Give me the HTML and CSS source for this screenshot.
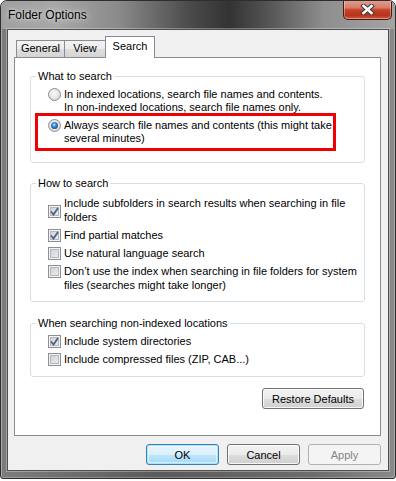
FILE: index.html
```html
<!DOCTYPE html>
<html lang="en">
<head>
    <meta charset="UTF-8">
    <meta name="viewport" content="width=device-width, initial-scale=1.0">
    <title>Folder Options</title>
    <link rel="stylesheet" href="styles.css">
</head>
<body>
    <div class="window">
        <div class="titlebar">
            <span class="title">Folder Options</span>
            <button class="close" aria-label="Close">
                <svg width="15" height="11" viewBox="0 0 15 11">
                    <path d="M3.5 2 L11.5 9 M11.5 2 L3.5 9" stroke="#3d3d3d" stroke-width="4.6" stroke-linecap="square" fill="none"/>
                    <path d="M3.5 2 L11.5 9 M11.5 2 L3.5 9" stroke="#fff" stroke-width="2.6" stroke-linecap="square" fill="none"/>
                </svg>
            </button>
        </div>

        <div class="client">
            <div class="tabs">
                <div class="tab">General</div>
                <div class="tab">View</div>
                <div class="tab active">Search</div>
            </div>

            <div class="panel">
                <fieldset class="group group-what">
                    <legend>What to search</legend>
                    <div class="opts">
                        <label class="opt">
                            <span class="radio"></span>
                            <span>In indexed locations, search file names and contents.<br>In non-indexed locations, search file names only.</span>
                        </label>
                        <label class="opt marked">
                            <span class="radio on"></span>
                            <span>Always search file names and contents (this might take<br>several minutes)</span>
                            <span class="highlight"></span>
                        </label>
                    </div>
                </fieldset>

                <fieldset class="group group-how">
                    <legend>How to search</legend>
                    <div class="opts">
                        <label class="opt mid">
                            <span class="check on"><svg width="11" height="11" viewBox="0 0 11 11"><path d="M2 5.5 L4.5 8.5 L9 2" stroke="#4d6185" stroke-width="1.8" fill="none"/></svg></span>
                            <span>Include subfolders in search results when searching in file<br>folders</span>
                        </label>
                        <label class="opt">
                            <span class="check on"><svg width="11" height="11" viewBox="0 0 11 11"><path d="M2 5.5 L4.5 8.5 L9 2" stroke="#4d6185" stroke-width="1.8" fill="none"/></svg></span>
                            <span>Find partial matches</span>
                        </label>
                        <label class="opt">
                            <span class="check"></span>
                            <span>Use natural language search</span>
                        </label>
                        <label class="opt">
                            <span class="check"></span>
                            <span>Don’t use the index when searching in file folders for system<br>files (searches might take longer)</span>
                        </label>
                    </div>
                </fieldset>

                <fieldset class="group group-non">
                    <legend>When searching non-indexed locations</legend>
                    <div class="opts">
                        <label class="opt">
                            <span class="check on"><svg width="11" height="11" viewBox="0 0 11 11"><path d="M2 5.5 L4.5 8.5 L9 2" stroke="#4d6185" stroke-width="1.8" fill="none"/></svg></span>
                            <span>Include system directories</span>
                        </label>
                        <label class="opt">
                            <span class="check"></span>
                            <span>Include compressed files (ZIP, CAB...)</span>
                        </label>
                    </div>
                </fieldset>

                <div class="panel-foot">
                    <button class="btn restore">Restore Defaults</button>
                </div>
            </div>

            <div class="dialog-buttons">
                <button class="btn default">OK</button>
                <button class="btn">Cancel</button>
                <button class="btn" disabled>Apply</button>
            </div>
        </div>
    </div>
</body>
</html>
```

FILE: styles.css
```css
* {
    margin: 0;
    padding: 0;
    box-sizing: border-box;
}

body {
    font-family: "Liberation Sans", Arial, sans-serif;
    font-size: 11px;
    color: #000;
    background: #fff;
}

.window {
    width: 396px;
    height: 479px;
    border: 1px solid #2e2e2e;
    border-radius: 7px 7px 3px 3px;
    background: linear-gradient(to right, #7d7d7d, #5a5a5a 40%, #6e6e6e 80%, #8a8a8a);
    box-shadow: inset 1px 1px 0 rgba(255,255,255,0.35), inset -1px -1px 0 rgba(255,255,255,0.25);
    display: flex;
    flex-direction: column;
    padding-bottom: 7px;
    overflow: hidden;
}

.titlebar {
    height: 28px;
    flex: none;
    display: flex;
    justify-content: space-between;
    align-items: flex-start;
    padding-left: 7px;
    padding-right: 3px;
    background: linear-gradient(to right, #a0a0a0 0%, #a6a6a6 14%, #8a8a8a 30%, #4a4a4a 48%, #333 58%, #555 68%, #8e8e8e 82%, #a4a4a4 100%);
}

.title {
    font-size: 12px;
    line-height: 28px;
    color: #000;
    text-shadow: 0 0 8px rgba(255,255,255,0.8), 0 0 3px rgba(255,255,255,0.6);
}

.close {
    width: 49px;
    height: 20px;
    margin-top: -1px;
    border: 1px solid #4a1a10;
    border-top: none;
    border-radius: 0 0 5px 5px;
    background: linear-gradient(#e2a193 0%, #d77c68 40%, #c4452b 52%, #b8321a 80%, #cf5c43 100%);
    box-shadow: inset 0 0 0 1px rgba(255,255,255,0.35);
    display: flex;
    align-items: center;
    justify-content: center;
}

.close svg {
    display: block;
}

.client {
    flex: 1;
    margin: 0 6px;
    background: #f0f0f0;
    border: 1px solid #4f4f4f;
    box-shadow: 0 0 0 1px rgba(255,255,255,0.3);
    display: flex;
    flex-direction: column;
}

.tabs {
    display: flex;
    align-items: flex-end;
    padding-left: 8px;
    margin-top: 6px;
    height: 21px;
    position: relative;
    z-index: 1;
}

.tab {
    height: 17px;
    line-height: 15px;
    text-align: center;
    border: 1px solid #898c95;
    border-bottom: none;
    background: linear-gradient(#f3f3f3 0%, #ebebeb 50%, #dddddd 51%, #d5d5d5 100%);
    margin-left: -1px;
}

.tab:first-child {
    margin-left: 0;
    width: 49px;
}

.tab:nth-child(2) {
    width: 42px;
}

.tab.active {
    width: 50px;
    height: 22px;
    margin-bottom: -1px;
    line-height: 19px;
    background: #fff;
}

.panel {
    height: 379px;
    margin: 0 7px 0 6px;
    background: #fff;
    border: 1px solid #898c95;
    padding: 11px 15px 0 15px;
}

.group {
    border: 1px solid #d5dfe5;
    border-radius: 3px;
    padding: 0 5px;
    min-inline-size: 0;
}

.group legend {
    padding: 0 2px;
    line-height: 14px;
}

.opts {
    display: flex;
    flex-direction: column;
    gap: 4px;
    padding-left: 12px;
}

.group-what .opts {
    gap: 5px;
    padding-top: 5px;
    padding-bottom: 17px;
}

.group-what .opt {
    line-height: 13px;
}

.group-what .radio {
    margin-top: 0;
}

.group-how {
    margin-top: 13px;
}

.group-how .opts {
    padding-top: 6px;
    padding-bottom: 9px;
}

.group-non {
    margin-top: 14px;
}

.group-non .opts {
    padding-top: 4px;
    padding-bottom: 10px;
}

.opt {
    display: flex;
    align-items: flex-start;
    gap: 3px;
    line-height: 14px;
}

.opt.marked {
    position: relative;
}

.highlight {
    position: absolute;
    left: -13px;
    top: -6px;
    width: 301px;
    height: 38px;
    border: 3px solid #f00000;
}

.radio {
    flex: none;
    width: 13px;
    height: 13px;
    margin-top: 1px;
    border-radius: 50%;
    border: 1px solid #8a8c8e;
    background: radial-gradient(circle at 45% 40%, #fbfbfb 0%, #e8e8e8 45%, #cfd1d3 100%);
    display: flex;
    align-items: center;
    justify-content: center;
}

.radio.on::after {
    content: "";
    width: 7px;
    height: 7px;
    border-radius: 50%;
    background: radial-gradient(circle at 45% 40%, #bfe4ff 0%, #3f8ad6 35%, #184e8e 75%, #0d2f5c 100%);
}

.check {
    flex: none;
    width: 13px;
    height: 13px;
    margin-top: 1px;
    border: 1px solid #8e8f8f;
    background: linear-gradient(135deg, #cbcfd5, #eef0f2);
    box-shadow: inset 0 0 0 1px #f4f4f4, inset 0 0 0 2px #b4b8bd;
    display: flex;
    align-items: center;
    justify-content: center;
}

.check svg {
    display: block;
}

.opt.mid .check {
    margin-top: 9px;
}

.panel-foot {
    display: flex;
    justify-content: flex-end;
    margin-top: 11px;
    padding-right: 1px;
}

.btn {
    font-family: inherit;
    font-size: 11px;
    color: #000;
    height: 21px;
    width: 73px;
    border: 1px solid #707070;
    border-radius: 3px;
    background: linear-gradient(#f2f2f2 0%, #ebebeb 50%, #dddddd 51%, #cfcfcf 100%);
    box-shadow: inset 0 0 0 1px rgba(255,255,255,0.8);
}

.btn.restore {
    width: 102px;
}

.btn.default {
    border-color: #3c7fb1;
    background: linear-gradient(#eaf6fd 0%, #d9f0fc 50%, #bee6fd 51%, #a7d9f5 100%);
    box-shadow: inset 0 0 0 1px #a6e4fa, inset 0 0 0 2px rgba(255,255,255,0.5);
}

.btn:disabled {
    color: #838383;
    border-color: #adb2b5;
    background: #f4f4f4;
    box-shadow: none;
}

.dialog-buttons {
    display: flex;
    justify-content: flex-end;
    gap: 8px;
    margin-top: 8px;
    padding-right: 7px;
}
```
